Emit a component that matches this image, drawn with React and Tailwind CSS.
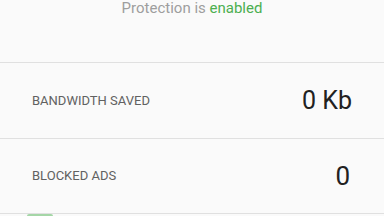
export default function App() {
  return (
    <div className="w-[384px] h-[216px] overflow-hidden bg-[#fafafa]" style={{ fontFamily: 'Roboto, "Liberation Sans", sans-serif' }}>
      <div className="h-[62px] pt-[1px] text-center text-[15px] leading-[15px] text-[#9e9e9e]">
        Protection is <span className="text-[#4caf50]">enabled</span>
      </div>
      <div className="h-px bg-[#e0e0e0]" />
      <div className="h-[75px] flex items-center justify-between pl-[32px] pr-[32px]">
        <span className="text-[13px] text-[#616161]">BANDWIDTH SAVED</span>
        <span className="text-[25px] text-[#212121]">0 Kb</span>
      </div>
      <div className="h-px bg-[#e0e0e0]" />
      <div className="h-[74px] flex items-center justify-between pl-[32px] pr-[34px]">
        <span className="text-[13px] text-[#616161]">BLOCKED ADS</span>
        <span className="text-[26px] text-[#212121]">0</span>
      </div>
      <div className="h-px bg-[#e0e0e0]" />
      <div className="ml-[27px] w-[26px] h-[2px] bg-[#a5d6a7] rounded-t-sm" />
    </div>
  );
}
